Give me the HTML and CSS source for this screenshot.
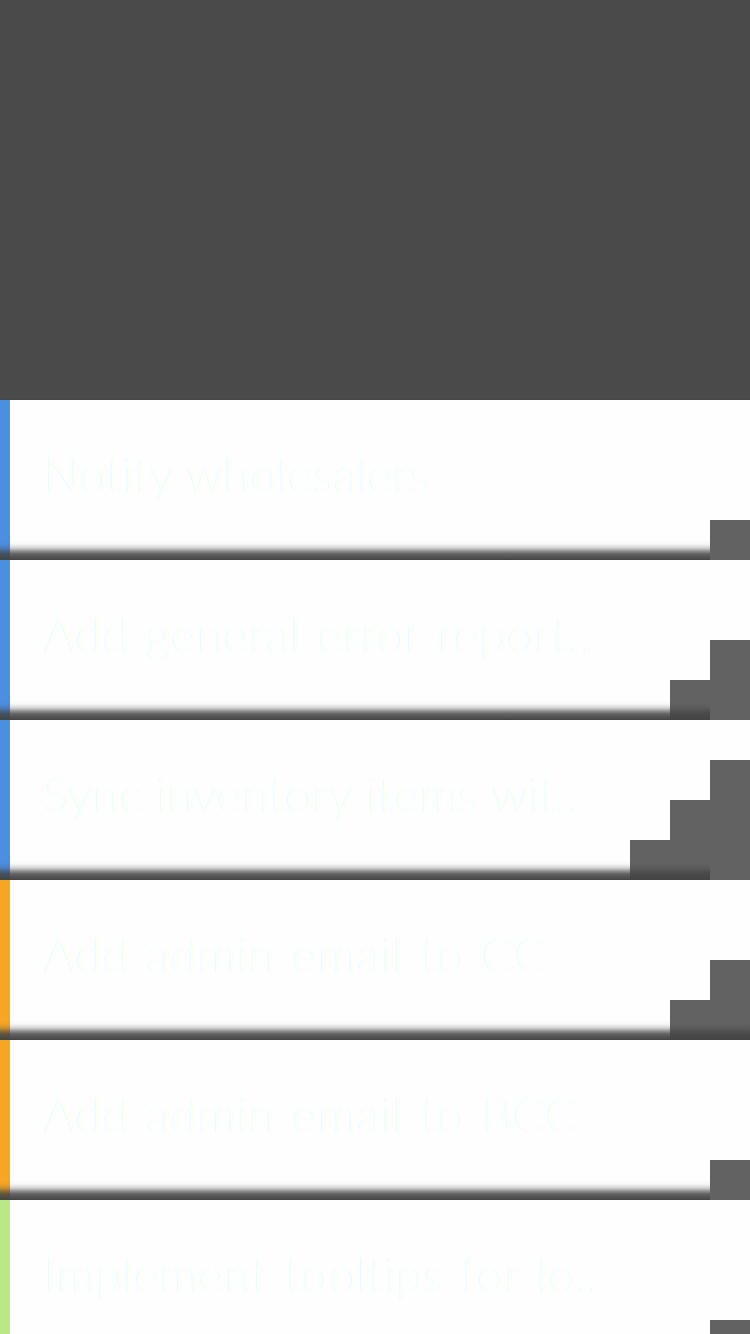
FILE: index.html
```html
<!DOCTYPE html>
<html lang="en">
<head>
<meta charset="utf-8">
<title>Tasks</title>
<link rel="stylesheet" href="styles.css">
</head>
<body>
<header class="header"></header>
<main class="list">
  <article class="row blue"><h2 class="title snug">Notify wholesalers</h2><div class="steps"><i class="one"></i></div></article>
  <article class="row blue"><h2 class="title">Add general error report..</h2><div class="steps"><i class="one"></i><i class="two"></i></div></article>
  <article class="row blue"><h2 class="title snug">Sync inventory items wit..</h2><div class="steps"><i class="one"></i><i class="two"></i><i class="three"></i></div></article>
  <article class="row orange full"><h2 class="title loose">Add admin email to CC</h2><div class="steps"><i class="one"></i><i class="two"></i></div></article>
  <article class="row orange"><h2 class="title loose">Add admin email to BCC</h2><div class="steps"><i class="one"></i></div></article>
  <article class="row green"><h2 class="title">Implement tooltips for lo..</h2><div class="steps"><i class="one"></i></div></article>
</main>
</body>
</html>
```

FILE: styles.css
```css
* { box-sizing: border-box; }
body {
  margin: 0;
  height: 1334px;
  overflow: hidden;
  background: #fefefe;
}
.header {
  height: 400px;
  background: #4a4a4a;
  border-bottom: 1px solid #4a4549;
}
.row {
  position: relative;
  display: flex;
  justify-content: space-between;
  height: 160px;
  border-left: 10px solid;
  background: #fefefe;
}
.blue { border-color: #4a90e2; }
.orange { border-color: #f5a623; }
.green { border-color: #b8e986; }
.title {
  margin: 0;
  padding: 46px 0 0 34px;
  font-family: Lato, "Liberation Sans", sans-serif;
  font-size: 48px;
  font-weight: 300;
  line-height: 56px;
  letter-spacing: 0.6px;
  word-spacing: 3px;
  white-space: nowrap;
  color: #fefefe;
  text-shadow: -1px 0 #e2ffff, 1px 0 #ffffec;
}
.snug { letter-spacing: 0.2px; word-spacing: 1px; }
.loose { letter-spacing: 0.7px; word-spacing: 3px; }
.steps {
  display: flex;
  align-items: flex-end;
}
.steps i {
  width: 40px;
  background: #626262;
}
.one { height: 40px; }
.two { height: 80px; }
.three { height: 120px; }
/* Shadow along the foot of the card */
.row::after {
  content: "";
  position: absolute;
  left: -10px;
  right: 40px;
  bottom: 0;
  height: 20px;
  background: linear-gradient(rgba(68,68,68,0) 0, rgba(68,68,68,.04) 4px, rgba(68,68,68,.18) 7px, rgba(68,68,68,.34) 9px, rgba(68,68,68,.58) 11px, rgba(68,68,68,.84) 14px, #444 20px);
}
.full::after { right: 0; }
```
